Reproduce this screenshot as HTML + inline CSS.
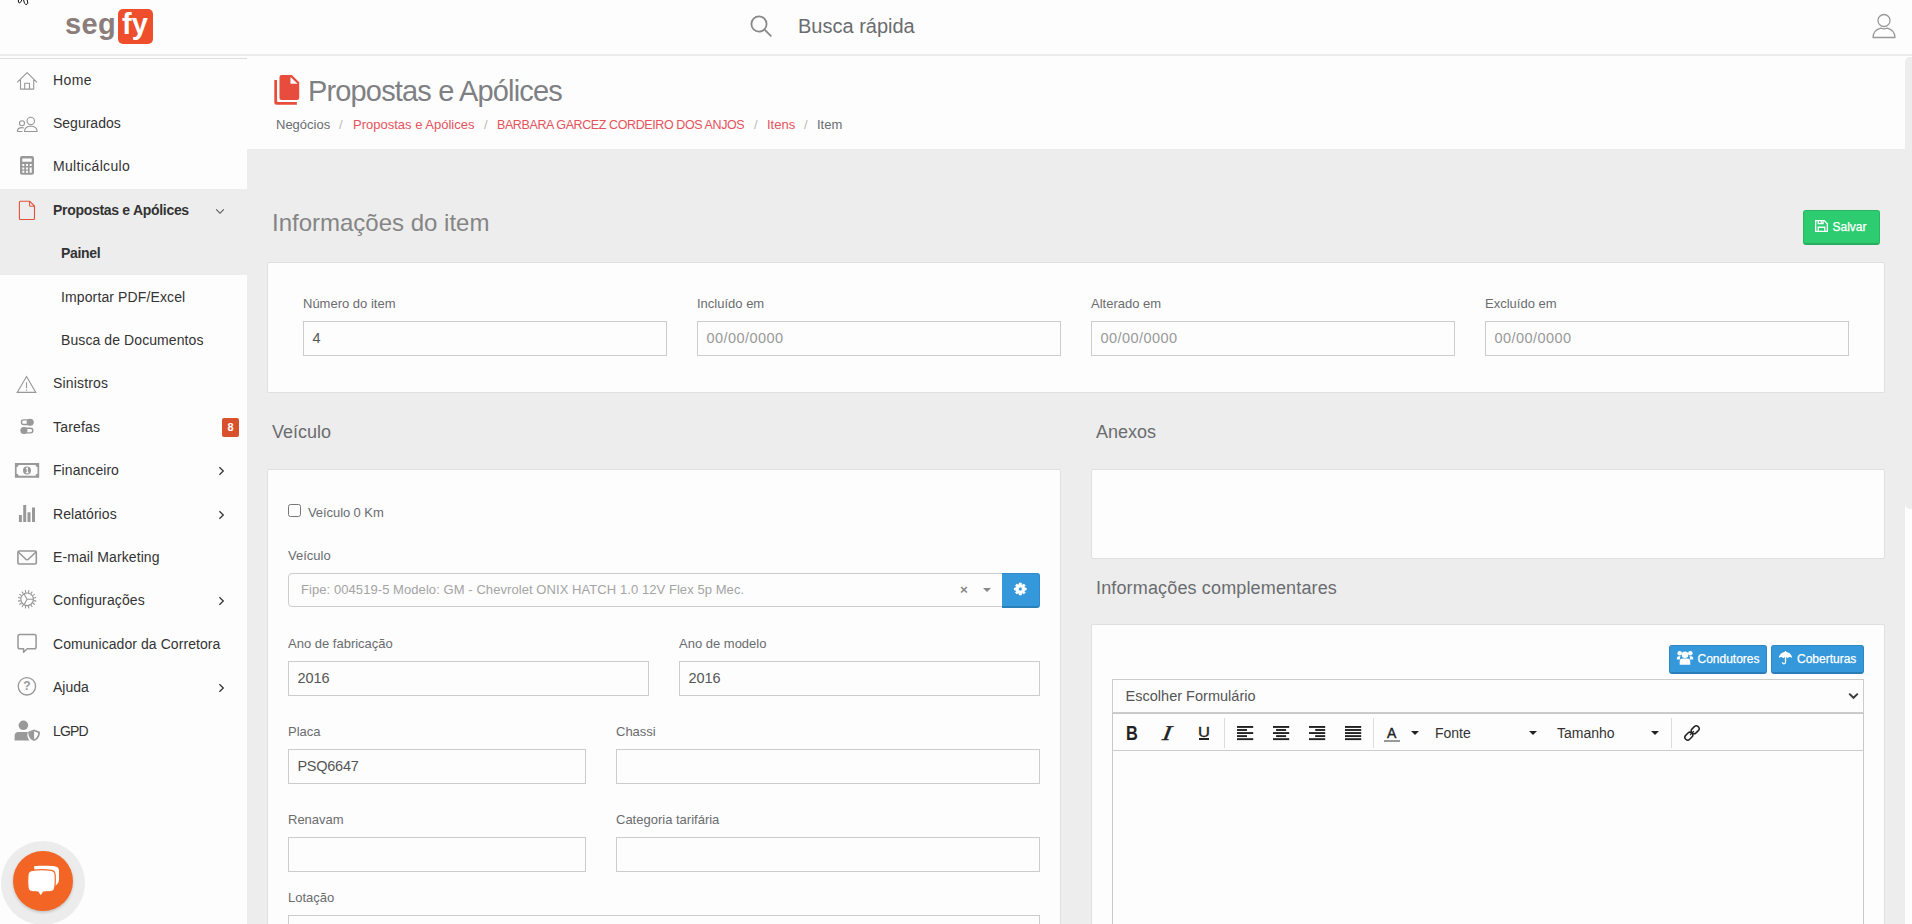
<!DOCTYPE html>
<html lang="pt-br">
<head>
<meta charset="utf-8">
<title>Propostas e Apólices</title>
<style>
*{box-sizing:border-box;margin:0;padding:0}
html,body{width:1912px;height:924px;overflow:hidden;background:#ededed;font-family:"Liberation Sans",Arial,sans-serif;font-size:14px;color:#333}
.abs{position:absolute}
#top{position:absolute;left:0;top:0;width:1912px;height:56px;background:#fdfdfd;border-bottom:2px solid #ececec}
#side{position:absolute;left:0;top:56px;width:247px;height:868px;background:#fdfdfd}
#side .line{position:absolute;left:0;top:2px;width:247px;height:1px;background:#ddd}
#side .act{position:absolute;left:0;top:133px;width:247px;height:86px;background:#ededed}
.mi{position:absolute;left:53px;font-size:14px;color:#333;white-space:nowrap;line-height:16px}
.mi.sub{left:61px}
.mi.b{font-weight:bold}
.ic{position:absolute}
.chev{position:absolute;left:217px}
#ph{position:absolute;left:247px;top:56px;width:1658px;height:93px;background:#fdfdfd}
h1{position:absolute;left:308px;top:73px;font-size:29px;letter-spacing:-0.85px;font-weight:normal;color:#7e8083;line-height:36px;white-space:nowrap}
.bc{position:absolute;top:117px;font-size:13px;line-height:15px;white-space:nowrap;color:#6a6c6f}
.bc.r{color:#e5525c}
.bc.s{color:#bbb}
.h2{position:absolute;left:272px;top:208px;font-size:24px;color:#858585;line-height:30px;white-space:nowrap}
.h3{position:absolute;font-size:18px;color:#6a6c6f;line-height:22px;white-space:nowrap}
.card{position:absolute;background:#fdfdfd;border:1px solid #e0e0e0;border-radius:2px}
.lb{position:absolute;font-size:13px;color:#6a6c6f;line-height:15px;white-space:nowrap}
.in{position:absolute;height:35px;border:1px solid #ccc;background:#fdfdfd;font-size:14.500px;line-height:33px;padding-left:8.400px;color:#555;white-space:nowrap;overflow:hidden}
.in.ph{color:#999;letter-spacing:0.45px}
.btn{position:absolute;color:#fff;font-size:12px;white-space:nowrap;border-radius:3px;-webkit-text-stroke:0.25px #fff}
</style>
</head>
<body>
<div id="top"></div>
<div id="side"><div class="line"></div><div class="act"></div></div>
<div id="ph"></div>

<!-- header -->
<div class="abs" style="left:65px;top:6px;font-size:29px;font-weight:bold;color:#8b7d7b;line-height:36px;letter-spacing:0.4px" id="seg">seg</div>
<div class="abs" style="left:118px;top:9px;width:35px;height:35px;border-radius:5px;background:#ee4e2c"></div>
<div class="abs" style="left:122px;top:6px;font-size:29px;font-weight:bold;color:#fff;line-height:36px;letter-spacing:0px" id="fy">fy</div>
<svg class="abs" style="left:748px;top:13px" width="26" height="26" viewBox="0 0 26 26" fill="none" stroke="#888" stroke-width="1.8"><circle cx="11" cy="11" r="7.6"/><path d="M16.600 16.600L22.800 22.800" stroke-linecap="round"/></svg>
<div class="abs" style="left:798px;top:14px;font-size:20px;color:#6a6c6f;line-height:24px;white-space:nowrap" id="busca">Busca rápida</div>
<svg class="abs" style="left:1871px;top:12px" width="26" height="28" viewBox="0 0 26 28" fill="none" stroke="#999" stroke-width="1.3"><circle cx="13" cy="8.5" r="6"/><path d="M2 25.5c0-5 3.5-8 7.5-9.3 2.3 .9 4.700 .9 7 0 4 1.300 7.500 4.300 7.500 9.300z" stroke-linejoin="round"/></svg>

<!-- sidebar items -->
<div class="mi" style="top:72px;letter-spacing:0.4px">Home</div>
<div class="mi" style="top:115px">Segurados</div>
<div class="mi" style="top:158px;letter-spacing:0.33px">Multicálculo</div>
<div class="mi b" style="top:202px;letter-spacing:-0.3px">Propostas e Apólices</div>
<div class="mi sub b" style="top:245px;letter-spacing:-0.3px">Painel</div>
<div class="mi sub" style="top:289px;letter-spacing:0.12px">Importar PDF/Excel</div>
<div class="mi sub" style="top:332px;letter-spacing:0.09px">Busca de Documentos</div>
<div class="mi" style="top:375px;letter-spacing:0.17px">Sinistros</div>
<div class="mi" style="top:419px;letter-spacing:0.2px">Tarefas</div>
<div class="mi" style="top:462px;letter-spacing:0.06px">Financeiro</div>
<div class="mi" style="top:506px;letter-spacing:0.07px">Relatórios</div>
<div class="mi" style="top:549px;letter-spacing:0.1px">E-mail Marketing</div>
<div class="mi" style="top:592px;letter-spacing:0.12px">Configurações</div>
<div class="mi" style="top:636px;letter-spacing:0.07px">Comunicador da Corretora</div>
<div class="mi" style="top:679px">Ajuda</div>
<div class="mi" style="top:723px;letter-spacing:-0.8px">LGPD</div>
<svg class="abs" style="left:217px;top:465px" width="8" height="12" viewBox="0 0 8 12" fill="none" stroke="#333" stroke-width="1.25"><path d="M2.400 2.200L6.300 6 2.400 9.800"/></svg>
<svg class="abs" style="left:217px;top:509px" width="8" height="12" viewBox="0 0 8 12" fill="none" stroke="#333" stroke-width="1.25"><path d="M2.400 2.200L6.300 6 2.400 9.800"/></svg>
<svg class="abs" style="left:217px;top:595px" width="8" height="12" viewBox="0 0 8 12" fill="none" stroke="#333" stroke-width="1.25"><path d="M2.400 2.200L6.300 6 2.400 9.800"/></svg>
<svg class="abs" style="left:217px;top:682px" width="8" height="12" viewBox="0 0 8 12" fill="none" stroke="#333" stroke-width="1.25"><path d="M2.400 2.200L6.300 6 2.400 9.800"/></svg>
<svg class="abs" style="left:215px;top:208px" width="10" height="7" viewBox="0 0 10 7" fill="none" stroke="#555" stroke-width="1.1"><path d="M1.200 1.300L5 5.300 8.800 1.300"/></svg>
<div class="abs" style="left:222px;top:418px;width:17px;height:19px;background:#d9512c;border-radius:2px;color:#fff;font-size:11px;font-weight:bold;text-align:center;line-height:18px">8</div>

<!-- page header -->
<svg class="abs" style="left:274px;top:75px" width="26" height="30" viewBox="0 0 26 30" id="copyic"><path d="M0.300 5V27.300a2.500 2.500 0 0 0 2.500 2.500H22.900V27.100H4.500a1.500 1.500 0 0 1-1.500-1.500V5z" fill="#e74c3c"/><path d="M7.700 0H17.800L25.200 7.300V22.700a2.200 2.200 0 0 1-2.200 2.200H7.700a2.200 2.200 0 0 1-2.200-2.200V2.200A2.200 2.200 0 0 1 7.700 0z" fill="#e74c3c"/><path d="M16.500 2L23.600 8.800H16.500z" fill="#fff"/></svg>
<h1 id="h1">Propostas e Apólices</h1>
<div class="bc" style="left:276px" id="bc1">Negócios</div>
<div class="bc s" style="left:339px">/</div>
<div class="bc r" style="left:353px" id="bc2">Propostas e Apólices</div>
<div class="bc s" style="left:484px">/</div>
<div class="bc r" style="left:497px;top:117.500px;font-size:12.500px;letter-spacing:-0.4px" id="bc3">BARBARA GARCEZ CORDEIRO DOS ANJOS</div>
<div class="bc s" style="left:754px">/</div>
<div class="bc r" style="left:767px" id="bc4">Itens</div>
<div class="bc s" style="left:804px">/</div>
<div class="bc" style="left:817px" id="bc5">Item</div>

<!-- content -->
<div class="h2" id="h2">Informações do item</div>
<div class="btn" style="left:1803px;top:210px;width:77px;height:35px;background:#2ecc71;border:1px solid #29b765;border-bottom:2px solid #27ae60;line-height:33px;padding-left:28.500px" id="salvar">Salvar</div>
<div class="card" style="left:267px;top:262px;width:1618px;height:131px"></div>
<div class="lb" style="left:303px;top:296px">Número do item</div>
<div class="lb" style="left:697px;top:296px">Incluído em</div>
<div class="lb" style="left:1091px;top:296px">Alterado em</div>
<div class="lb" style="left:1485px;top:296px">Excluído em</div>
<div class="in" style="left:303px;top:321px;width:364px">4</div>
<div class="in ph" style="left:697px;top:321px;width:364px">00/00/0000</div>
<div class="in ph" style="left:1091px;top:321px;width:364px">00/00/0000</div>
<div class="in ph" style="left:1485px;top:321px;width:364px">00/00/0000</div>

<div class="h3" style="left:272px;top:421px">Veículo</div>
<div class="h3" style="left:1096px;top:421px">Anexos</div>
<div class="card" style="left:267px;top:469px;width:794px;height:470px"></div>
<div class="card" style="left:1091px;top:469px;width:794px;height:90px"></div>
<div class="h3" style="left:1096px;top:577px;letter-spacing:0.15px">Informações complementares</div>
<div class="card" style="left:1091px;top:624px;width:794px;height:320px"></div>

<!-- vehicle card -->
<div class="abs" style="left:288px;top:504px;width:13px;height:13px;border:1px solid #767676;border-radius:2.500px;background:#fdfdfd"></div>
<div class="lb" style="left:308px;top:505px;letter-spacing:-0.08px">Veículo 0 Km</div>
<div class="lb" style="left:288px;top:548px">Veículo</div>
<div class="abs" style="left:288px;top:573px;width:715px;height:34px;border:1px solid #ccc;border-radius:4px 0 0 4px;background:#fdfdfd;font-size:13px;color:#a4a4a4;letter-spacing:0.07px;line-height:31px;padding-left:12px;white-space:nowrap" id="fipe">Fipe: 004519-5 Modelo: GM - Chevrolet ONIX HATCH 1.0 12V Flex 5p Mec.</div>
<div class="abs" style="left:960px;top:582px;font-size:13.500px;font-weight:bold;color:#888;line-height:16px">×</div>
<div class="abs" style="left:983px;top:588px;width:0;height:0;border-left:4px solid transparent;border-right:4px solid transparent;border-top:4.500px solid #888"></div>
<div class="abs" style="left:1002px;top:573px;width:38px;height:35px;background:#3498db;border-radius:0 3px 3px 0;border:1px solid #2f8bcb;border-left:none;border-bottom:2px solid #2a80b9"></div><svg class="abs" style="left:1012px;top:581px" width="17" height="17" viewBox="0 0 17 17"><path d="M14.21 6.97L14.21 9.03L12.77 9.07L12.22 10.40L13.21 11.45L11.75 12.91L10.70 11.92L9.37 12.47L9.33 13.91L7.27 13.91L7.23 12.47L5.90 11.92L4.85 12.91L3.39 11.45L4.38 10.40L3.83 9.07L2.39 9.03L2.39 6.97L3.83 6.93L4.38 5.60L3.39 4.55L4.85 3.09L5.90 4.08L7.23 3.53L7.27 2.09L9.33 2.09L9.37 3.53L10.70 4.08L11.75 3.09L13.21 4.55L12.22 5.60L12.77 6.93ZM6.30 8.00a2.00 2.00 0 1 0 4.00 0a2.00 2.00 0 1 0 -4.00 0Z" fill="#fff" fill-rule="evenodd" stroke="#fff" stroke-width="0.8" stroke-linejoin="round"/></svg>
<div class="lb" style="left:288px;top:636px">Ano de fabricação</div>
<div class="lb" style="left:679px;top:636px">Ano de modelo</div>
<div class="in" style="left:288px;top:661px;width:361px">2016</div>
<div class="in" style="left:679px;top:661px;width:361px">2016</div>
<div class="lb" style="left:288px;top:724px">Placa</div>
<div class="lb" style="left:616px;top:724px">Chassi</div>
<div class="in" style="left:288px;top:749px;width:298px;letter-spacing:-0.25px">PSQ6647</div>
<div class="in" style="left:616px;top:749px;width:424px"></div>
<div class="lb" style="left:288px;top:812px">Renavam</div>
<div class="lb" style="left:616px;top:812px">Categoria tarifária</div>
<div class="in" style="left:288px;top:837px;width:298px"></div>
<div class="in" style="left:616px;top:837px;width:424px"></div>
<div class="lb" style="left:288px;top:890px">Lotação</div>
<div class="in" style="left:288px;top:915px;width:752px"></div>

<!-- info complementares card -->
<div class="btn" style="left:1669px;top:645px;width:98px;height:29px;background:#3498db;border:1px solid #2d86c5;border-bottom:2px solid #2a7db8;line-height:27px;padding-left:27.500px" id="cond">Condutores</div>
<div class="btn" style="left:1771px;top:645px;width:93px;height:29px;background:#3498db;border:1px solid #2d86c5;border-bottom:2px solid #2a7db8;line-height:27px;padding-left:25px" id="cob">Coberturas</div>
<div class="abs" style="left:1112px;top:679px;width:752px;height:34px;border:1px solid #ccc;background:#fdfdfd;font-size:14.500px;color:#555;line-height:32px;padding-left:12.500px;letter-spacing:0.02px" id="esc">Escolher Formulário</div>
<svg class="abs" style="left:1848px;top:692px" width="11" height="8" viewBox="0 0 11 8" fill="none" stroke="#3a3a3a" stroke-width="1.900"><path d="M1.200 1.600L5.500 5.800 9.800 1.600"/></svg>
<div class="abs" style="left:1112px;top:713px;width:752px;height:230px;border:1px solid #c8c8c8;background:#fdfdfd"></div>
<div class="abs" style="left:1112px;top:750px;width:752px;height:1px;background:#ccc"></div>
<div class="abs" style="left:1224px;top:718px;width:1px;height:30px;background:#ddd"></div>
<div class="abs" style="left:1373px;top:718px;width:1px;height:30px;background:#ddd"></div>
<div class="abs" style="left:1671px;top:718px;width:1px;height:30px;background:#ddd"></div>
<div class="abs" style="left:1126px;top:721.600px;font-size:19.500px;font-weight:bold;color:#222;line-height:22px;transform:scaleX(0.84);transform-origin:0 0" id="tb_b">B</div>
<div class="abs" style="left:1163px;top:721px;font-size:21px;font-style:italic;color:#222;line-height:24px;font-family:'Liberation Serif',serif;-webkit-text-stroke:0.5px #222;transform:scaleX(1.2) skewX(-8deg);transform-origin:0 50%" id="tb_i">I</div>
<div class="abs" style="left:1198px;top:722.700px;font-size:15px;color:#222;line-height:18px;-webkit-text-stroke:0.35px #222;transform:scaleX(1.1);transform-origin:0 0" id="tb_u">U</div><div class="abs" style="left:1199px;top:738px;width:10.200px;height:1.700px;background:#222"></div>
<svg class="abs" style="left:1236.8px;top:726px" width="17" height="15" fill="#222"><rect x="0.00" y="0.00" width="16.2" height="1.900"/><rect x="0.00" y="3.05" width="10.0" height="1.900"/><rect x="0.00" y="6.10" width="16.2" height="1.900"/><rect x="0.00" y="9.15" width="10.0" height="1.900"/><rect x="0.00" y="12.20" width="16.2" height="1.900"/></svg>
<svg class="abs" style="left:1272.8px;top:726px" width="17" height="15" fill="#222"><rect x="0.00" y="0.00" width="16.2" height="1.900"/><rect x="3.10" y="3.05" width="10.0" height="1.900"/><rect x="0.00" y="6.10" width="16.2" height="1.900"/><rect x="3.10" y="9.15" width="10.0" height="1.900"/><rect x="0.00" y="12.20" width="16.2" height="1.900"/></svg>
<svg class="abs" style="left:1308.8px;top:726px" width="17" height="15" fill="#222"><rect x="0.00" y="0.00" width="16.2" height="1.900"/><rect x="6.20" y="3.05" width="10.0" height="1.900"/><rect x="0.00" y="6.10" width="16.2" height="1.900"/><rect x="6.20" y="9.15" width="10.0" height="1.900"/><rect x="0.00" y="12.20" width="16.2" height="1.900"/></svg>
<svg class="abs" style="left:1344.8px;top:726px" width="17" height="15" fill="#222"><rect x="0.00" y="0.00" width="16.2" height="1.900"/><rect x="0.00" y="3.05" width="16.2" height="1.900"/><rect x="0.00" y="6.10" width="16.2" height="1.900"/><rect x="0.00" y="9.15" width="16.2" height="1.900"/><rect x="0.00" y="12.20" width="16.2" height="1.900"/></svg>
<div class="abs" style="left:1387px;top:725px;font-size:14px;color:#222;line-height:16px;-webkit-text-stroke:0.4px #222" id="tb_a">A</div>
<div class="abs" style="left:1384px;top:740px;width:16px;height:2px;background:#999"></div>
<div class="abs" style="left:1411px;top:731px;width:0;height:0;border-left:4px solid transparent;border-right:4px solid transparent;border-top:4px solid #222"></div>
<div class="abs" style="left:1435px;top:725px;font-size:14px;color:#333;line-height:16px" id="fonte">Fonte</div>
<div class="abs" style="left:1529px;top:731px;width:0;height:0;border-left:4px solid transparent;border-right:4px solid transparent;border-top:4px solid #222"></div>
<div class="abs" style="left:1557px;top:725px;font-size:14px;color:#333;line-height:16px" id="tam">Tamanho</div>
<div class="abs" style="left:1651px;top:731px;width:0;height:0;border-left:4px solid transparent;border-right:4px solid transparent;border-top:4px solid #222"></div>
<svg class="abs" style="left:1683px;top:724px" width="18" height="18" viewBox="0 0 18 18" fill="none" stroke="#222" stroke-width="1.500" stroke-linecap="round"><rect x="7.900" y="2.950" width="8.600" height="5.600" rx="2.700" transform="rotate(-45 12.200 5.750)"/><rect x="1.500" y="9.400" width="8.600" height="5.600" rx="2.700" transform="rotate(-45 5.800 12.200)"/><path d="M7.400 10.600L10.600 7.400" stroke-width="1.300"/></svg>

<!-- scrollbar -->
<div class="abs" style="left:1905px;top:56px;width:7px;height:868px;background:#fdfdfd"></div>
<div class="abs" style="left:1905px;top:57px;width:12px;height:452px;background:#ededed;border-radius:5px"></div>

<!-- chat bubble -->
<div class="abs" style="left:1px;top:841px;width:84px;height:84px;border-radius:42px;background:#ececec"></div>
<div class="abs" style="left:13px;top:851px;width:60px;height:60px;border-radius:30px;background:#f26524;box-shadow:0 1.500px 3px rgba(0,0,0,0.18)"></div>
<svg class="abs" style="left:24px;top:862px" width="40" height="36" viewBox="0 0 40 36"><path d="M10 4.200C17 3.600 27 3.600 31.500 4.400 34 4.900 35 6.500 35 9V17c0 3-1 5-3.500 6.500L12 20z" fill="#fff"/><path d="M8 8.300C14 7.500 22 7.500 27.500 8.300 30 8.700 31 10.500 31.200 13 31.400 17 31.300 22 30.800 25.500 30.500 28 29 29.300 26.500 29.600L19.500 30 16.700 34.400 14 30 8 29.600C5.500 29.300 4.300 28 4 25.500 3.600 21 3.600 16 4 12.500 4.300 10 5.500 8.700 8 8.300z" fill="#fff" stroke="#f26524" stroke-width="1.200"/></svg>

<!-- sidebar icons -->
<svg class="abs" style="left:0;top:0" width="52" height="760" viewBox="0 0 52 760" fill="none" stroke="#979797" stroke-width="1.100" id="sideicons">
<!-- home -->
<path d="M17.200 82.300L27.100 72.600 37 82.300M20.500 79.800V89.100H33.700V79.800M24.700 89.100V83.300H29.500V89.100" stroke-linejoin="round"/>
<!-- users -->
<circle cx="30.800" cy="120.900" r="3.700"/><circle cx="22" cy="123.200" r="2.500"/>
<path d="M24.500 131.500c0-3.600 2.600-5.300 6.300-5.300s6.300 1.700 6.300 5.300z" stroke-linejoin="round"/>
<path d="M23.800 127.900c-.5-.2-1.100-.3-1.800-.3-2.700 0-4.600 1.300-4.600 3.900h5" stroke-linejoin="round"/>
<!-- calculator -->
<path d="M22 156h10a2 2 0 0 1 2 2v14.800a2 2 0 0 1-2 2H22a2 2 0 0 1-2-2V158a2 2 0 0 1 2-2zM22.300 158.400v3.400h9.400v-3.400zM22.300 164h2v2h-2zM26 164h2v2h-2zM29.700 164h2v2h-2zM22.300 167.400h2v2h-2zM26 167.400h2v2h-2zM22.300 170.800h2v2h-2zM26 170.800h2v2h-2zM29.700 167.400h2v5.400h-2z" fill="#999" fill-rule="evenodd" stroke="none"/>
<!-- file (red) -->
<path d="M20.400 201.300H29.800L34.500 206V218.500a1 1 0 0 1-1 1H20.400a1 1 0 0 1-1-1V202.300a1 1 0 0 1 1-1zM29.600 201.500V205.300a1 1 0 0 0 1 1H34.300" stroke="#e0533a" stroke-width="1.100" stroke-linejoin="round"/>
<!-- warning -->
<path d="M26.500 376.500L35.800 392.400H17.200zM26.500 382.200V388.200M26.500 389.600V390.800" stroke-linejoin="miter"/>
<!-- tasks toggles -->
<rect x="21.400" y="419.900" width="11.400" height="4.600" rx="2.300" stroke-width="1.400"/><circle cx="30.100" cy="422.200" r="3.500" fill="#999" stroke="none"/>
<rect x="21.400" y="428.300" width="11.400" height="4.600" rx="2.300" stroke-width="1.400"/><circle cx="23.900" cy="430.600" r="3.500" fill="#999" stroke="none"/>
<!-- money -->
<path d="M14.900 463.100H39.200V477.700H14.900zM18.600 465a2.200 2.200 0 0 1-2 2v6.800a2.200 2.200 0 0 1 2 2H35.500a2.200 2.200 0 0 1 2-2V467a2.200 2.200 0 0 1-2-2z" fill="#999" fill-rule="evenodd" stroke="none"/>
<circle cx="27" cy="470.400" r="4" fill="#999" stroke="none"/>
<path d="M26 468.800L27.300 468V472.600M25.800 472.700H28.700" stroke="#fff" stroke-width="1.100"/>
<!-- bar chart -->
<path d="M18.900 514.900h3v7h-3zM23.200 505.100h3v16.800h-3zM27.500 512.200h3v9.700h-3zM32 507.600h3v14.300h-3z" fill="#999" stroke="none"/>
<!-- envelope -->
<rect x="17.900" y="551" width="18.400" height="13" rx="1.200" stroke-width="1.600"/>
<path d="M18.300 552L25.800 559.300a1.800 1.800 0 0 0 2.600 0L35.900 552" stroke-width="1.500"/>
<!-- gear -->
<circle cx="27.1" cy="599.3" r="6.300"/><path d="M33.57 600.59L36.22 601.11M32.59 602.97L34.83 604.47M30.77 604.79L32.27 607.03M28.39 605.77L28.91 608.42M25.81 605.77L25.29 608.42M23.43 604.79L21.93 607.03M21.61 602.97L19.37 604.47M20.63 600.59L17.98 601.11M20.63 598.01L17.98 597.49M21.61 595.63L19.37 594.13M23.43 593.81L21.93 591.57M25.81 592.83L25.29 590.18M28.39 592.83L28.91 590.18M30.77 593.81L32.27 591.57M32.59 595.63L34.83 594.13M33.57 598.01L36.22 597.49" stroke-width="1.100"/><path d="M27.10 599.30L33.40 599.30M27.10 599.30L23.95 604.76M27.10 599.30L23.95 593.84"/>
<!-- comment -->
<path d="M19.800 634.500H34.300a1.800 1.800 0 0 1 1.800 1.800V647a1.800 1.800 0 0 1-1.800 1.800H27.200L23.600 652.200V648.800H19.800a1.800 1.800 0 0 1-1.800-1.800V636.300a1.800 1.800 0 0 1 1.800-1.800z" stroke-width="1.500" stroke-linejoin="round"/>
<!-- help -->
<circle cx="26.900" cy="686.300" r="8.700" stroke-width="1.300"/>
<!-- lgpd -->
<circle cx="23.400" cy="725.300" r="4.800" fill="#999" stroke="none"/>
<path d="M14.600 740.500V736a4 4 0 0 1 4-4h9.500c-.7 1-.9 2.500-.6 4.200.3 1.700 1.100 3.200 2.300 4.300z" fill="#999" stroke="none"/>
<path d="M34.100 729.500l5.300 2.100c.4.200.6.500.6.900 0 4.500-2.800 7.400-5.400 8.300a1.300 1.300 0 0 1-1 0c-2.600-.9-5.400-3.800-5.400-8.300 0-.4.200-.7.600-.9z" fill="#999" stroke="none"/>
<path d="M34.100 731.200v8c1.900-.9 3.900-3 4.100-6.300z" fill="#fff" stroke="none"/>
</svg>
<div class="abs" style="left:22.500px;top:679px;font-size:12px;font-weight:bold;color:#999;line-height:14px;width:9px;text-align:center">?</div>

<!-- button icons -->
<svg class="abs" style="left:1815px;top:220px" width="13" height="12" viewBox="0 0 13 12"><path d="M0 0H9.500L13 3.500V12H0zM1.300 1.300V10.700H2.600V6.600H10.400V10.700H11.700V4L9 1.300H8.700V4.300H2.600V1.300zM3.900 1.300V3H7.400V1.300zM5.600 1.300H6.700V3H5.600zM3.900 7.900V10.700H9.100V7.900z" fill="#fff" fill-rule="evenodd"/></svg>
<svg class="abs" style="left:1676px;top:650px" width="18" height="16" viewBox="0 0 18 16" fill="#fff"><circle cx="3.700" cy="3.300" r="2.300"/><circle cx="14.300" cy="3.300" r="2.300"/><path d="M0.800 9.500V8.300a2 2 0 0 1 2-2h1.800a3.800 3.800 0 0 0-.4 3.200zM17.200 9.500V8.300a2 2 0 0 0-2-2h-1.800a3.800 3.800 0 0 1 .4 3.200z"/><circle cx="9" cy="4.700" r="3.300"/><path d="M3.700 14.800v-3a3.300 3.300 0 0 1 3.300-3.300h4a3.300 3.300 0 0 1 3.300 3.300v3z"/></svg>
<svg class="abs" style="left:1778px;top:650px" width="15" height="15" viewBox="0 0 15 15"><path d="M7.500 1V2" stroke="#fff" stroke-width="1.300"/><path d="M0.800 8.300C1 4.500 3.800 2 7.500 2s6.500 2.500 6.700 6.300c-.7-.9-1.500-1.300-2.300-1.300s-1.500.4-2.200 1.300C9 7.400 8.300 7 7.500 7s-1.500.4-2.200 1.300C4.600 7.400 3.900 7 3.100 7S1.500 7.400.8 8.300z" fill="#fff"/><path d="M7.500 7V12.300a1.500 1.500 0 0 1-3 0" fill="none" stroke="#fff" stroke-width="1.300"/></svg>

<!-- cursor remnant -->
<svg class="abs" style="left:16px;top:0" width="14" height="7" viewBox="0 0 14 7" fill="#fff" stroke="#111" stroke-width="1"><path d="M2.300 -1L2.500 2.300Q3 3.400 4.300 2.500L6.500 -1"/><path d="M7.300 -1L8.500 3.300Q9.500 5 11 4.300 12.200 3.500 11.600 2L11 -1"/></svg>
<!-- sections appended below -->
</body>
</html>
